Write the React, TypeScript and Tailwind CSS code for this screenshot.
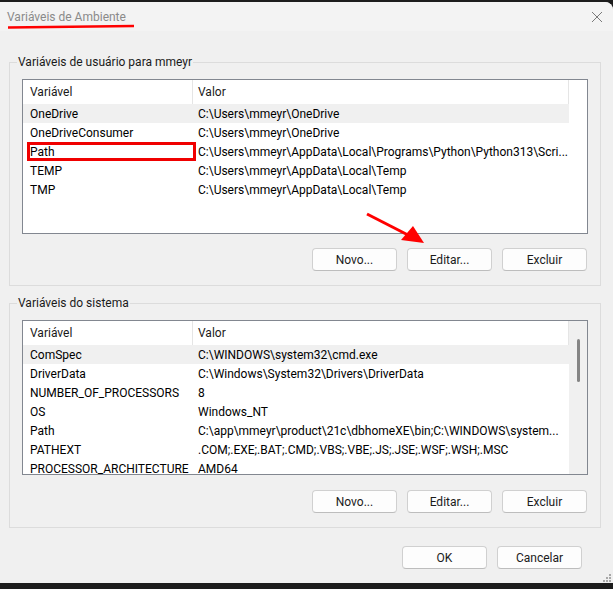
import React from 'react';

const userVars: [string, string][] = [
  ['OneDrive', 'C:\\Users\\mmeyr\\OneDrive'],
  ['OneDriveConsumer', 'C:\\Users\\mmeyr\\OneDrive'],
  ['Path', 'C:\\Users\\mmeyr\\AppData\\Local\\Programs\\Python\\Python313\\Scri...'],
  ['TEMP', 'C:\\Users\\mmeyr\\AppData\\Local\\Temp'],
  ['TMP', 'C:\\Users\\mmeyr\\AppData\\Local\\Temp'],
];

const systemVars: [string, string][] = [
  ['ComSpec', 'C:\\WINDOWS\\system32\\cmd.exe'],
  ['DriverData', 'C:\\Windows\\System32\\Drivers\\DriverData'],
  ['NUMBER_OF_PROCESSORS', '8'],
  ['OS', 'Windows_NT'],
  ['Path', 'C:\\app\\mmeyr\\product\\21c\\dbhomeXE\\bin;C:\\WINDOWS\\system...'],
  ['PATHEXT', '.COM;.EXE;.BAT;.CMD;.VBS;.VBE;.JS;.JSE;.WSF;.WSH;.MSC'],
  ['PROCESSOR_ARCHITECTURE', 'AMD64'],
];

function WinButton({ children }: { children: React.ReactNode }) {
  return (
    <button
      type="button"
      className="flex h-[23px] w-[85px] items-center justify-center rounded-[4px] border border-[#d0d0d0] border-b-[#bdbdbd] bg-[#fdfdfd] text-[12px] text-[#1b1b1b]"
    >
      {children}
    </button>
  );
}

function VarList({ rows, scroll, marked }: { rows: [string, string][]; scroll?: boolean; marked?: string }) {
  return (
    <div className="flex h-[155px] overflow-hidden border border-[#828790] bg-white">
      <div className="min-w-0 flex-1">
        <div className="flex h-[24px] items-center border-r border-[#e5e5e5] text-[#1a1a1a]">
          <div className="flex h-full w-[170px] items-center border-r border-[#e5e5e5] pl-[7px]">Variável</div>
          <div className="pl-[5px]">Valor</div>
        </div>
        {rows.map(([name, value], i) => (
          <div key={name + i} className={`flex h-[19px] items-center whitespace-nowrap text-black ${i === 0 ? 'bg-[#f0f0f0]' : ''}`}>
            <div className="relative flex h-full w-[170px] shrink-0 items-center overflow-hidden pl-[7px]">
              {name}
            </div>
            <div className="relative -ml-[170px] w-[170px] shrink-0 self-stretch">
              {marked === name && (
                <span className="absolute left-[4px] top-0 h-[19px] w-[169px] border-[3px] border-[#f00000]" />
              )}
            </div>
            <div className="pl-[5px]">{value}</div>
          </div>
        ))}
      </div>
      <div className={`flex w-[18px] shrink-0 justify-center pt-[18px] ${scroll ? 'bg-[#f0f0f0]' : 'bg-white'}`}>
        {scroll && <div className="h-[43px] w-[3px] rounded-full bg-[#858585]" />}
      </div>
    </div>
  );
}

function Group({ title, children, className }: { title: string; children: React.ReactNode; className?: string }) {
  return (
    <fieldset className={`ml-[9px] w-[592px] border border-[#dcdcdc] px-[12px] pb-[14px] pt-[9px] ${className ?? ''}`}>
      <legend className="-ml-[5px] px-[1px] leading-[16px] text-[#1a1a1a]">{title}</legend>
      {children}
    </fieldset>
  );
}

export default function App() {
  return (
    <div
      className="relative flex h-[589px] w-[613px] flex-col overflow-hidden bg-[#1c1c1c] pb-[6px] pt-[2px] text-[12px]"
      style={{ fontFamily: 'Roboto, "Liberation Sans", sans-serif' }}
    >
      <div className="flex flex-1 flex-col overflow-hidden rounded-tr-[8px] bg-[#f0f0f0]">
        <div className="flex h-[29px] shrink-0 items-center justify-between bg-[#f3f3f3] pl-[7px] pr-[10px]">
          <span className="text-[#8a8a8a]">Variáveis de Ambiente</span>
          <svg width="12" height="12" viewBox="0 0 12 12" className="mt-[1px]">
            <path d="M1 1 L11 11 M11 1 L1 11" stroke="#7a7a7a" strokeWidth="1" />
          </svg>
        </div>

        <div className="flex flex-1 flex-col">
          <Group title="Variáveis de usuário para mmeyr" className="mt-[23px]">
            <VarList rows={userVars} marked="Path" />
            <div className="mt-[14px] flex justify-end gap-[10px] pr-[1px]">
              <WinButton>Novo...</WinButton>
              <WinButton>Editar...</WinButton>
              <WinButton>Excluir</WinButton>
            </div>
          </Group>

          <Group title="Variáveis do sistema" className="mt-[9px]">
            <VarList rows={systemVars} scroll />
            <div className="mt-[15px] flex justify-end gap-[10px] pr-[1px]">
              <WinButton>Novo...</WinButton>
              <WinButton>Editar...</WinButton>
              <WinButton>Excluir</WinButton>
            </div>
          </Group>

          <div className="mt-[18px] flex justify-end gap-[10px] pr-[31px]">
            <WinButton>OK</WinButton>
            <WinButton>Cancelar</WinButton>
          </div>
        </div>
      </div>

      {/* annotations drawn over the dialog */}
      <svg className="pointer-events-none absolute left-0 top-0" width="613" height="589">
        <line x1="8" y1="27.5" x2="134" y2="26" stroke="#ff0000" strokeWidth="2.5" />
        <line x1="367" y1="214" x2="408" y2="235" stroke="#ff0000" strokeWidth="3" />
        <polygon points="424,243 401,240 413,226" fill="#ff0000" />
        <g fill="#a8a8a8">
          <rect x="609" y="574" width="2" height="2" />
          <rect x="606" y="577" width="2" height="2" />
          <rect x="609" y="577" width="2" height="2" />
          <rect x="603" y="580" width="2" height="2" />
          <rect x="606" y="580" width="2" height="2" />
          <rect x="609" y="580" width="2" height="2" />
        </g>
      </svg>
    </div>
  );
}
